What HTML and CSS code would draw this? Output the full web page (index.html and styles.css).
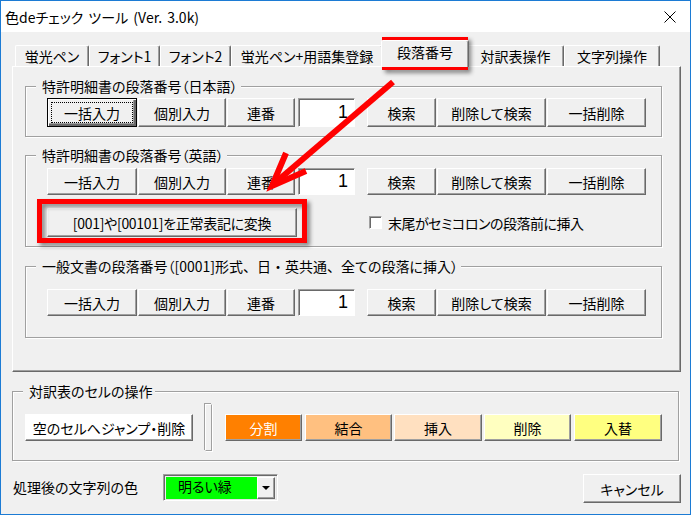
FILE: index.html
```html
<!DOCTYPE html>
<html lang="ja">
<head>
<meta charset="utf-8">
<title>色deチェック ツール</title>
<link rel="stylesheet" href="styles.css">
</head>
<body>
<div class="window">
  <div class="titlebar">
    <span class="title">色deチェック ツール (Ver. 3.0k)</span>
    <svg class="close" width="12" height="12" viewBox="0 0 12 12"><path d="M0.5 0.5 L11.5 11.5 M11.5 0.5 L0.5 11.5" stroke="#000" stroke-width="1" fill="none"/></svg>
  </div>
  <div class="client">
    <div class="tabs">
      <div class="tab t1">蛍光ペン</div>
      <div class="tab t2">フォント1</div>
      <div class="tab t3">フォント2</div>
      <div class="tab t4">蛍光ペン+用語集登録</div>
      <div class="tab sel">段落番号</div>
      <div class="tab t6">対訳表操作</div>
      <div class="tab t7">文字列操作</div>
    </div>
    <div class="panel">
      <div class="group g1">
        <span class="legend">特許明細書の段落番号（日本語）</span>
        <div class="row tall">
          <button class="btn w-bulk focused">一括入力</button>
          <button class="btn w-ind">個別入力</button>
          <button class="btn w-ser">連番</button>
          <div class="num">1</div>
          <button class="btn w-find">検索</button>
          <button class="btn w-delfind">削除して検索</button>
          <button class="btn w-delall">一括削除</button>
        </div>
      </div>
      <div class="group g2">
        <span class="legend">特許明細書の段落番号（英語）</span>
        <div class="row">
          <button class="btn w-bulk">一括入力</button>
          <button class="btn w-ind">個別入力</button>
          <button class="btn w-ser">連番</button>
          <div class="num">1</div>
          <button class="btn w-find">検索</button>
          <button class="btn w-delfind">削除して検索</button>
          <button class="btn w-delall">一括削除</button>
        </div>
        <div class="row row2">
          <button class="btn w-conv">[001]や[00101]を正常表記に変換</button>
          <span class="check"></span>
          <span class="check-label">末尾がセミコロンの段落前に挿入</span>
        </div>
      </div>
      <div class="group g3">
        <span class="legend">一般文書の段落番号（[0001]形式<span class="fw">、</span>日<span class="fw">・</span>英共通<span class="fw">、</span>全ての段落に挿入）</span>
        <div class="row">
          <button class="btn w-bulk">一括入力</button>
          <button class="btn w-ind">個別入力</button>
          <button class="btn w-ser">連番</button>
          <div class="num">1</div>
          <button class="btn w-find">検索</button>
          <button class="btn w-delfind">削除して検索</button>
          <button class="btn w-delall">一括削除</button>
        </div>
      </div>
    </div>
    <div class="group g4">
      <span class="legend">対訳表のセルの操作</span>
      <div class="row">
        <button class="btn w-jump white">空のセルへジャンプ・削除</button>
        <span class="sep"></span>
        <button class="btn c-split">分割</button>
        <button class="btn c-join">結合</button>
        <button class="btn c-ins">挿入</button>
        <button class="btn c-del">削除</button>
        <button class="btn c-swap">入替</button>
      </div>
    </div>
    <div class="bottom">
      <span class="color-label">処理後の文字列の色</span>
      <div class="combo">
        <span class="combo-value">明るい緑</span>
        <span class="combo-btn"><span class="tri"></span></span>
      </div>
      <span class="spacer"></span>
      <button class="btn w-cancel">キャンセル</button>
    </div>
  </div>
</div>
<svg class="annot" width="691" height="515" viewBox="0 0 691 515">
  <defs>
    <filter id="sh" x="-10%" y="-20%" width="130%" height="160%">
      <feDropShadow dx="3" dy="3" stdDeviation="2" flood-color="#000" flood-opacity="0.45"/>
    </filter>
  </defs>
  <rect x="384.5" y="39.5" width="81" height="28" fill="none" stroke="#ff0000" stroke-width="5" filter="url(#sh)"/>
  <rect x="39.5" y="201.5" width="265" height="39" fill="none" stroke="#ff0000" stroke-width="5" filter="url(#sh)"/>
  <line x1="393" y1="82" x2="276" y2="182" stroke="#ff0000" stroke-width="6"/>
  <polyline points="286,153 272,186 306,171" fill="none" stroke="#ff0000" stroke-width="6" stroke-linejoin="miter"/>
</svg>
</body>
</html>
```

FILE: styles.css
```css
* { box-sizing: border-box; }
html, body { margin: 0; padding: 0; }
body {
  position: relative;
  width: 691px;
  height: 515px;
  overflow: hidden;
  font-family: "Noto Sans CJK JP", "Noto Sans", sans-serif;
  font-size: 14px;
  font-feature-settings: "palt";
  color: #000;
  background: #f0f0f0;
}
.window {
  width: 691px;
  height: 515px;
  border: 1px solid #1c7bd4;
  background: #f0f0f0;
  display: flex;
  flex-direction: column;
}
.titlebar {
  height: 31px;
  flex: none;
  background: #fff;
  display: flex;
  align-items: center;
  padding-left: 4px;
}
.title { flex: 1; font-size: 14px; line-height: 20px; word-spacing: 2px; }
.close { margin-right: 14px; }

.client {
  flex: 1;
  padding: 0 9px 0 11px;
  display: flex;
  flex-direction: column;
}

/* tabs */
.tabs {
  height: 34px;
  flex: none;
  display: flex;
  align-items: flex-end;
  padding-left: 3px;
}
.tab {
  height: 21px;
  line-height: 20px;
  text-align: center;
  background: #f0f0f0;
  border-top: 1px solid #fff;
  border-left: 1px solid #fff;
  border-right: 1px solid #696969;
  box-shadow: inset -1px 0 0 #a0a0a0;
  border-top-left-radius: 2px;
  border-top-right-radius: 2px;
  white-space: nowrap;
}
.t1 { width: 74px; }
.t2 { width: 71px; }
.t3 { width: 71px; }
.t4 { width: 152px; }
.sel {
  position: relative;
  z-index: 2;
  width: 88px;
  height: 27px;
  margin: 0 -2px -1px -2px;
  line-height: 22px;
}
.t6 { width: 97px; }
.t7 { width: 96px; }

.panel {
  width: 669px;
  height: 306px;
  flex: none;
  border-top: 1px solid #fff;
  border-left: 1px solid #fff;
  border-right: 1px solid #696969;
  border-bottom: 1px solid #696969;
  box-shadow: inset -1px -1px 0 #a0a0a0;
  padding: 19px 0 0 12px;
}

/* group boxes */
.group {
  position: relative;
  width: 637px;
  border: 1px solid #a0a0a0;
  box-shadow: inset 1px 1px 0 #fff, 1px 1px 0 #fff;
}
.legend {
  position: absolute;
  top: -10px;
  left: 10px;
  padding: 0 3px 0 6px;
  line-height: 18px;
  background: #f0f0f0;
  white-space: nowrap;
}
.fw { font-feature-settings: normal; }
.g1 { height: 51px; padding: 11px 0 0 21px; }
.g2 { height: 92px; margin-top: 18px; padding: 12px 0 0 21px; }
.g3 { height: 72px; margin-top: 19px; padding: 22px 0 0 21px; }
.g4 { width: 667px; height: 70px; margin-top: 19px; padding: 22px 0 0 12px; }

.row {
  display: flex;
  align-items: center;
  height: 27px;
}
.row.tall { height: 29px; }
.row2 { height: 29px; margin-top: 13px; }

/* buttons */
.btn {
  font: inherit;
  color: #000;
  height: 100%;
  padding: 0;
  margin: 0;
  background: #f0f0f0;
  border: 1px solid;
  border-color: #fff #696969 #696969 #fff;
  box-shadow: inset -1px -1px 0 #a0a0a0;
  line-height: 20px;
  white-space: nowrap;
  flex: none;
}
.btn.focused {
  border-color: #000;
  box-shadow: inset 1px 1px 0 #fff, inset -2px -2px 0 #696969, inset -3px -3px 0 #a0a0a0;
  outline: 1px dotted #000;
  outline-offset: -5px;
}
.w-bulk { width: 90px; }
.w-ind { width: 88px; margin-left: 1px; }
.w-ser { width: 68px; margin-left: 1px; }
.num {
  width: 57px;
  height: 100%;
  margin: 0 12px 0 3px;
  background: #fff;
  border: 1px solid;
  border-color: #a0a0a0 #fff #fff #a0a0a0;
  box-shadow: inset 1px 1px 0 #696969;
  padding-right: 6px;
  font-family: "Liberation Sans", sans-serif;
  font-size: 18px;
  display: flex;
  align-items: center;
  justify-content: flex-end;
}
.w-find { width: 69px; }
.w-delfind { width: 109px; margin-left: 1px; }
.w-delall { width: 99px; margin-left: 1px; }
.w-conv { width: 250px; letter-spacing: -0.3px; }

.check {
  width: 13px;
  height: 13px;
  margin-left: 72px;
  background: #fff;
  border: 1px solid;
  border-color: #a0a0a0 #fff #fff #a0a0a0;
  box-shadow: inset 1px 1px 0 #696969;
  flex: none;
}
.check-label { margin-left: 6px; line-height: 18px; letter-spacing: -0.5px; }

/* group 4 */
.w-jump { width: 168px; }
.white { background: #fff; }
.sep {
  width: 7px;
  height: 47px;
  margin: 0 13px 0 12px;
  flex: none;
  background: #f0f0f0;
  border: 1px solid;
  border-color: #fff #a0a0a0 #a0a0a0 #fff;
  box-shadow: 1px 1px 0 #fff, -1px -1px 0 #a0a0a0;
}
.c-split { width: 77px; background: #ff8000; color: #fff; }
.c-join { width: 87px; margin-left: 3px; background: #ffc080; }
.c-ins { width: 88px; margin-left: 2px; background: #ffe0c0; }
.c-del { width: 87px; margin-left: 2px; background: #ffffc0; }
.c-swap { width: 88px; margin-left: 3px; background: #ffff80; }

/* bottom */
.bottom {
  display: flex;
  align-items: flex-start;
  height: 29px;
  margin-top: 13px;
}
.color-label {
  width: 150px;
  line-height: 27px;
  flex: none;
  margin-left: 1px;
}
.combo {
  width: 115px;
  height: 27px;
  display: flex;
  border: 1px solid;
  border-color: #a0a0a0 #fff #fff #a0a0a0;
  box-shadow: inset 1px 1px 0 #696969, inset -1px -1px 0 #e3e3e3;
  padding: 2px 2px 1px 2px;
  flex: none;
}
.combo-value {
  flex: 1;
  background: #00ff00;
  padding-left: 12px;
  line-height: 18px;
}
.combo-btn {
  width: 18px;
  background: #f0f0f0;
  border: 1px solid;
  border-color: #fff #696969 #696969 #fff;
  box-shadow: inset -1px -1px 0 #a0a0a0;
  display: flex;
  align-items: center;
  justify-content: center;
}
.tri {
  width: 0;
  height: 0;
  border-left: 4px solid transparent;
  border-right: 4px solid transparent;
  border-top: 4px solid #000;
}
.spacer { flex: 1; }
.w-cancel { width: 98px; height: 29px; }

.annot {
  position: absolute;
  top: 0;
  left: 0;
  pointer-events: none;
}
```
